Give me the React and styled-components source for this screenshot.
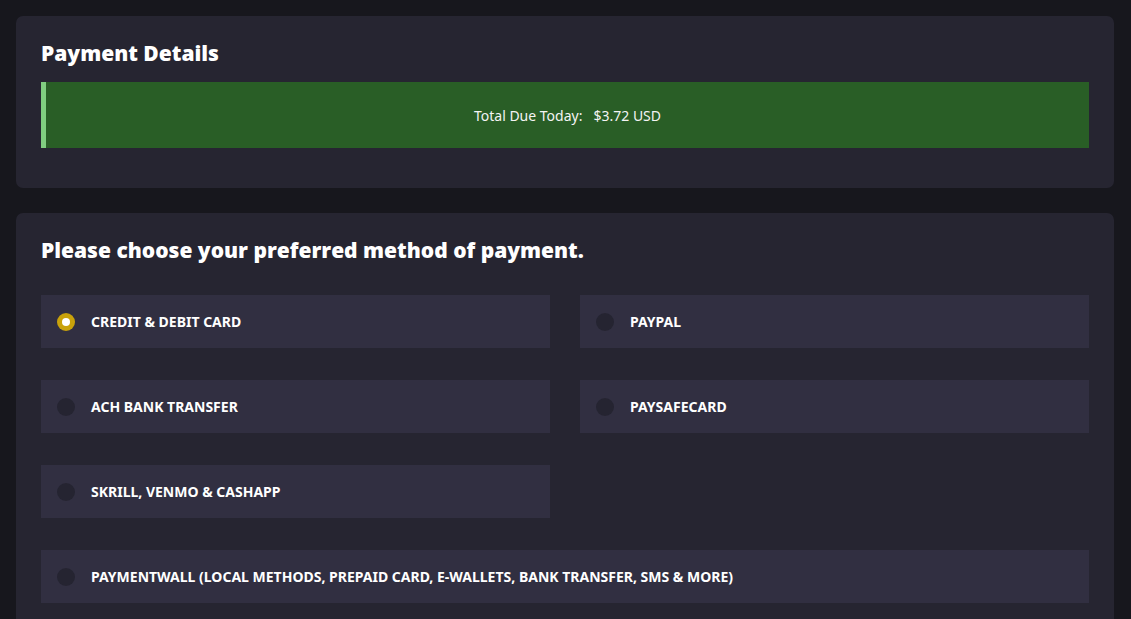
import React, { useState } from "react";
import styled, { createGlobalStyle } from "styled-components";

const Global = createGlobalStyle`
  html, body { margin: 0; padding: 0; background: #17171d; }
  body { font-family: "Noto Sans", "Open Sans", sans-serif; color: #fff; }
  * { box-sizing: border-box; }
`;

const Page = styled.div`
  padding: 16px 17px 16px 16px;
  display: flex;
  flex-direction: column;
  gap: 25px;
`;

const Card = styled.section`
  background: #262531;
  border-radius: 7px;
  padding: 25px 25px ${(p) => p.$pb || 40}px;
`;

const Heading = styled.h2`
  margin: 0 0 ${(p) => p.$mb}px;
  font-family: "Open Sans", "Noto Sans", sans-serif;
  font-weight: 800;
  font-size: 21px;
  line-height: 24px;
  color: #fff;
`;

const TotalBar = styled.div`
  height: 66px;
  background: #295e26;
  border-left: 5px solid #80ce80;
  display: flex;
  align-items: center;
  justify-content: center;
  gap: 11px;
  font-size: 14px;
  color: #f4f4f4;
`;

const Grid = styled.div`
  display: grid;
  grid-template-columns: 1fr 1fr;
  column-gap: 30px;
  row-gap: 32px;
`;

const Option = styled.label`
  grid-column: ${(p) => (p.$full ? "1 / -1" : "auto")};
  height: 53px;
  background: #312f41;
  display: flex;
  align-items: center;
  gap: 16px;
  padding-left: 16px;
  cursor: pointer;
  font-weight: 700;
  font-size: 14px;
  text-transform: uppercase;
  color: #fff;
`;

const Radio = styled.span`
  width: 18px;
  height: 18px;
  border-radius: 50%;
  flex: none;
  background: ${(p) => (p.$on ? "#c9a20b" : "#252431")};
  display: flex;
  align-items: center;
  justify-content: center;
  &::after {
    content: "";
    width: 8px;
    height: 8px;
    border-radius: 50%;
    background: #fff;
    display: ${(p) => (p.$on ? "block" : "none")};
  }
`;

const methods = [
  { id: "card", label: "Credit & Debit Card" },
  { id: "paypal", label: "PayPal" },
  { id: "ach", label: "ACH Bank Transfer" },
  { id: "psc", label: "Paysafecard" },
  { id: "skrill", label: "Skrill, Venmo & CashApp" },
  { id: "pw", label: "Paymentwall (Local Methods, Prepaid Card, E-Wallets, Bank Transfer, SMS & More)", full: true, break: true },
];

export default function App() {
  const [sel, setSel] = useState("card");
  return (
    <>
      <Global />
      <Page>
        <Card $pb={40}>
          <Heading $mb={17}>Payment Details</Heading>
          <TotalBar>
            <span>Total Due Today:</span>
            <span>$3.72 USD</span>
          </TotalBar>
        </Card>
        <Card $pb={40}>
          <Heading $mb={33}>Please choose your preferred method of payment.</Heading>
          <Grid>
            {methods.map((m) => (
              <React.Fragment key={m.id}>
                {m.break && <span />}
                <Option $full={m.full} onClick={() => setSel(m.id)}>
                  <Radio $on={sel === m.id} />
                  {m.label}
                </Option>
              </React.Fragment>
            ))}
          </Grid>
        </Card>
      </Page>
    </>
  );
}
